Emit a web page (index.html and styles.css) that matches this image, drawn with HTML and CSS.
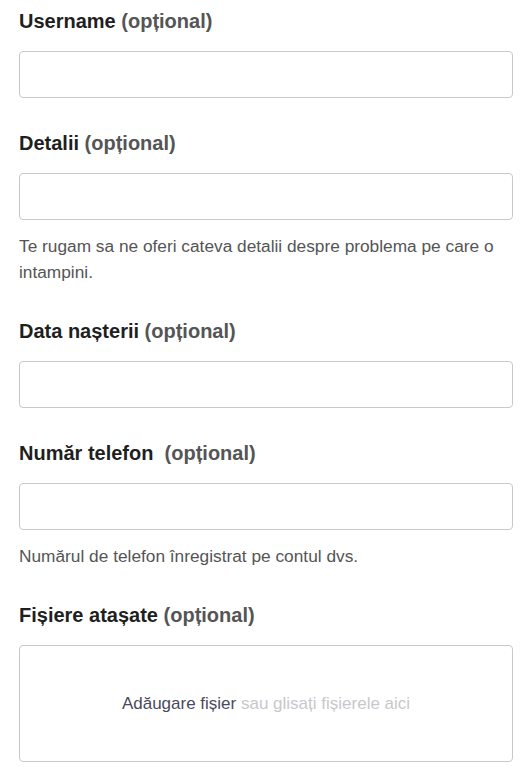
FILE: index.html
```html
<!DOCTYPE html>
<html lang="ro">
<head>
<meta charset="utf-8">
<link rel="stylesheet" href="styles.css">
</head>
<body>
<form class="form">
  <div class="field">
    <label class="label">Username <span class="opt">(opțional)</span></label>
    <input class="input" type="text">
  </div>
  <div class="field">
    <label class="label">Detalii <span class="opt">(opțional)</span></label>
    <input class="input" type="text">
    <p class="hint">Te rugam sa ne oferi cateva detalii despre problema pe care o intampini.</p>
  </div>
  <div class="field">
    <label class="label">Data nașterii <span class="opt">(opțional)</span></label>
    <input class="input" type="text">
  </div>
  <div class="field">
    <label class="label">Număr telefon &nbsp;<span class="opt">(opțional)</span></label>
    <input class="input" type="text">
    <p class="hint">Numărul de telefon înregistrat pe contul dvs.</p>
  </div>
  <div class="field">
    <label class="label">Fișiere atașate <span class="opt">(opțional)</span></label>
    <div class="drop"><span class="drop-add">Adăugare fișier</span>&nbsp;<span class="drop-rest">sau glisați fișierele aici</span></div>
  </div>
</form>
</body>
</html>
```
FILE: styles.css
```css
html, body {
  margin: 0;
  padding: 0;
  background: #fff;
}
body {
  font-family: "Liberation Sans", Arial, sans-serif;
  color: #222;
}
.form {
  padding: 9px 16px 0 19px;
}
.field {
  display: flex;
  flex-direction: column;
  margin-bottom: 33px;
}
.label {
  font-size: 20px;
  font-weight: bold;
  line-height: 24px;
  color: #1f1f1f;
  margin-bottom: 18px;
}
.opt {
  color: #555;
}
.input {
  box-sizing: border-box;
  height: 47px;
  width: 100%;
  margin: 0;
  border: 1px solid #c9c9c9;
  border-radius: 4px;
  background: #fff;
}
.hint {
  margin: 13px 0 1px;
  font-size: 17.3px;
  line-height: 26px;
  color: #555;
}
.drop {
  box-sizing: border-box;
  height: 117px;
  border: 1px solid #c9c9c9;
  border-radius: 4px;
  display: flex;
  align-items: center;
  justify-content: center;
  font-size: 17px;
}
.drop-add {
  color: #4a4a5e;
}
.drop-rest {
  color: #c8c8cc;
}
```
